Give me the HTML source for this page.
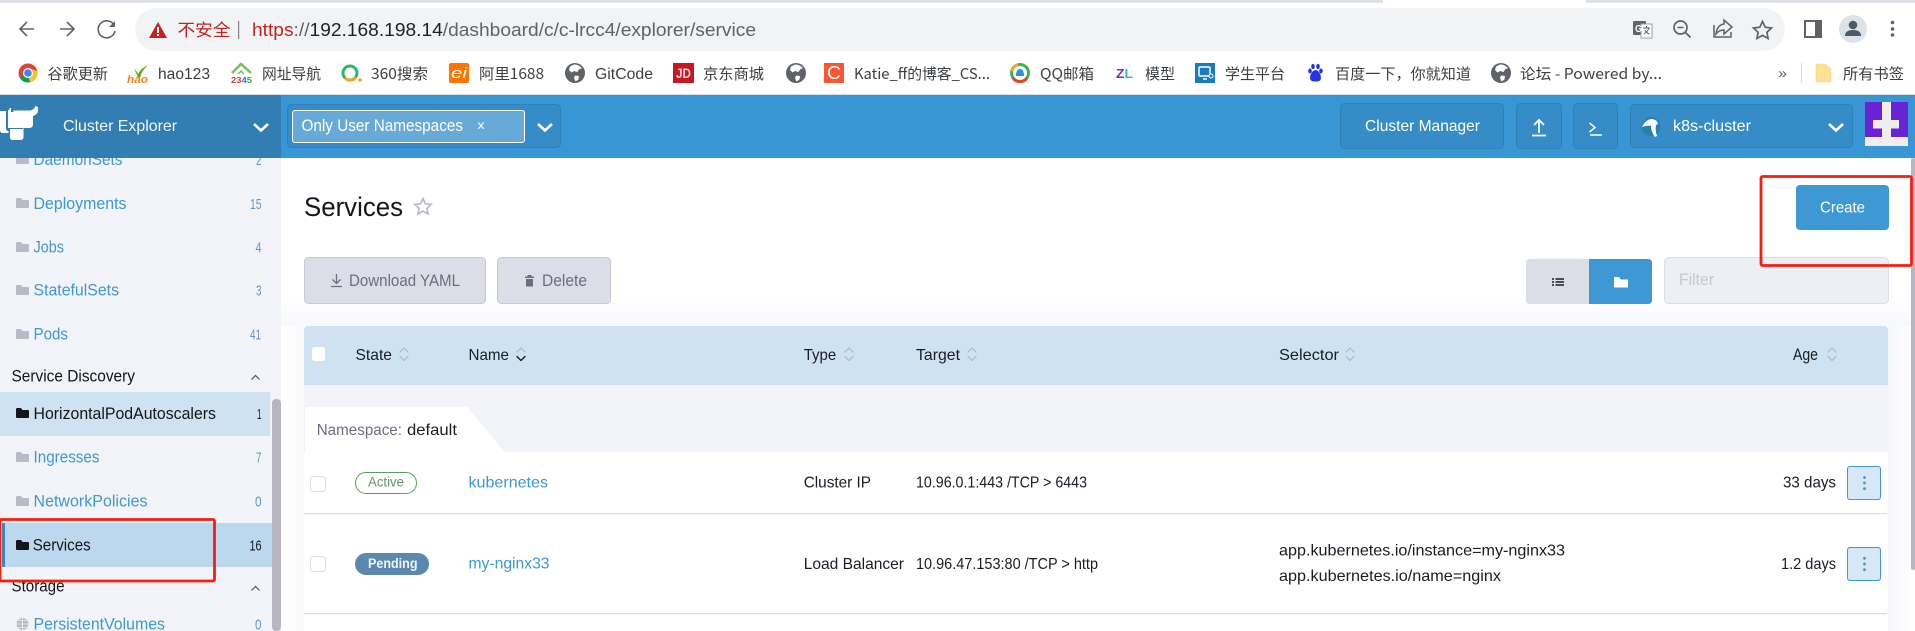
<!DOCTYPE html>
<html><head><meta charset="utf-8"><title>Services</title>
<style>
html,body{margin:0;padding:0;background:#fff;width:1915px;height:631px;overflow:hidden}
svg{display:block}
text{font-family:"Liberation Sans","Noto Sans CJK SC",sans-serif;font-size:16px;fill:#1b1c24;white-space:pre}
.bm{font-size:15.5px;fill:#3c4043}
.cjk{font-family:"Noto Sans CJK SC","Liberation Sans",sans-serif;font-size:15px;fill:#3c4043}
.side{font-size:17px;fill:#3d98d3}
.cnt{font-size:15px;fill:#5f97cf}
.hd{fill:#e8f3fb;font-size:16px}
.url{font-size:18px}
</style></head><body>
<svg xmlns="http://www.w3.org/2000/svg" width="1915" height="631" viewBox="0 0 1915 631">
<defs>
<path id="fo" d="M0 1.2Q0 0 1.2 0H5L6.6 2H12Q13 2 13 3V9Q13 10 12 10H1Q0 10 0 9Z"/>
<g id="sort" fill="none" stroke-width="1.1" stroke-linecap="round" stroke-linejoin="round"><path d="M1 5 5 1 9 5" /><path d="M1 9.5 5 13.500 9 9.500"/></g>
<g id="globe"><circle cx="10" cy="10" r="10" fill="#5f6368"/><path d="M9 1.500Q13 1 17 5L14 6.500 12.500 9 9 8 6.500 9.500 4 7 5 3.500ZM10 12.500 14 13 13.500 16.500 10.500 18.500 9 15Z" fill="#fff"/></g>
</defs>

<!-- chrome -->
<rect width="1915" height="95" fill="#fff"/>
<rect width="1383" height="3" fill="#dee1e6"/><rect x="1586" width="329" height="3" fill="#dee1e6"/>
<rect x="0" y="94" width="1915" height="1.500" fill="#d5dbe1"/>
<g fill="none" stroke="#5f6368" stroke-width="1.600">
<path d="M34 29H20M27 22l-7 7 7 7"/><path d="M60 29H74M67 22l7 7-7 7"/>
<path d="M114 25A8.500 8.500 0 1 0 115 31"/><path d="M115 21v6h-6" fill="#5f6368" stroke="none"/>
</g>
<rect x="135" y="8" width="1650" height="43" rx="21.500" fill="#f1f3f4"/>
<path d="M158 22 167 38H149Z" fill="#c5221f"/><rect x="157" y="27" width="2" height="6" fill="#fff"/><rect x="157" y="34" width="2" height="2" fill="#fff"/>
<text class="cjk" x="177.500" y="36" textLength="53" lengthAdjust="spacingAndGlyphs" style="fill:#c5221f;font-size:17px">不安全</text>
<rect x="238" y="21" width="1.200" height="18" fill="#80868b"/>
<text class="url" x="252" y="36" textLength="504" lengthAdjust="spacingAndGlyphs"><tspan fill="#c5221f">https</tspan><tspan fill="#5f6368">://</tspan><tspan fill="#202124">192.168.198.14</tspan><tspan fill="#5f6368">/dashboard/c/c-lrcc4/explorer/service</tspan></text>
<!-- right toolbar icons -->
<g>
<rect x="1633" y="21" width="13" height="14" rx="1.500" fill="#5f6368"/><rect x="1641" y="24" width="11" height="14" fill="#fff" stroke="#9aa0a6" stroke-width="1"/>
<text x="1635" y="32" textLength="7" lengthAdjust="spacingAndGlyphs" style="font-size:10px;font-weight:bold;fill:#fff">G</text>
<path d="M1643 28h7M1646.500 26v2M1649 28q-1.500 4-5 6M1645 30q1.500 3 4.500 4" stroke="#5f6368" fill="none" stroke-width="1"/>
<circle cx="1680.500" cy="27.500" r="6.500" fill="none" stroke="#5f6368" stroke-width="1.700"/><path d="M1685.500 32.500 1690.500 37.500" stroke="#5f6368" stroke-width="1.800"/><path d="M1677.500 27.500h6" stroke="#5f6368" stroke-width="1.500"/>
<path d="M1714 25v12h17V32M1716 34q1-9 8-10v-4l8 7-8 7v-4q-5 0-8 4Z" fill="none" stroke="#5f6368" stroke-width="1.500"/>
<path d="M1762.500 21.500l2.700 5.700 6.300.8-4.600 4.300 1.200 6.200-5.600-3.100-5.600 3.100 1.200-6.200-4.600-4.300 6.300-.8Z" fill="none" stroke="#5f6368" stroke-width="1.700"/>
<rect x="1804" y="20" width="18" height="18" fill="#5f6368"/><rect x="1806" y="22" width="9" height="14" fill="#fff"/>
<circle cx="1853" cy="29" r="14" fill="#dee1e6"/><circle cx="1853" cy="25" r="4.300" fill="#4e5a66"/><path d="M1845 36q0-6 8-6t8 6Z" fill="#4e5a66"/>
<circle cx="1892.500" cy="22.500" r="1.800" fill="#5f6368"/><circle cx="1892.500" cy="29" r="1.800" fill="#5f6368"/><circle cx="1892.500" cy="35" r="1.800" fill="#5f6368"/>
</g>

<!-- bookmarks -->
<g>
<circle cx="28" cy="73" r="9.500" fill="#db4437"/><path d="M28 73 19.800 78 A9.500 9.500 0 0 0 30 82.300Z" fill="#0f9d58"/><path d="M28 73 30 82.300A9.500 9.500 0 0 0 37.400 71 L28 68Z" fill="#fbc02d"/><circle cx="28" cy="73" r="5" fill="#fff"/><circle cx="28" cy="73" r="3.800" fill="#4285f4"/>
<text class="cjk" x="47.500" y="79" textLength="60.500" lengthAdjust="spacingAndGlyphs">谷歌更新</text>
<path d="M134 69q3 2 4 5 3-6 10-9-6 5-8 13-1 1-2 0-2-6-4-9Z" fill="#69a81d"/>
<text x="127" y="83" textLength="21" lengthAdjust="spacingAndGlyphs" style="font-size:11px;font-style:italic;font-weight:bold;fill:#f58220">hao</text>
<text class="bm" x="158" y="79" textLength="52" lengthAdjust="spacingAndGlyphs">hao123</text>
<path d="M232 73 241 64 251 73" fill="none" stroke="#7dbb63" stroke-width="2.500"/><path d="M238 74l3-3 3 3" fill="none" stroke="#7dbb63" stroke-width="1.500"/>
<text x="231" y="83" textLength="21" lengthAdjust="spacingAndGlyphs" style="font-size:8.500px;font-weight:bold;fill:#d8392b">23<tspan fill="#2b7bd4">4</tspan><tspan fill="#2aa84a">5</tspan></text>
<text class="cjk" x="262" y="79" textLength="59" lengthAdjust="spacingAndGlyphs">网址导航</text>
<circle cx="350" cy="73" r="7" fill="none" stroke="#2fb56b" stroke-width="3"/><path d="M345 78A7 7 0 0 0 356 77" fill="none" stroke="#f6a623" stroke-width="3"/><circle cx="360" cy="80" r="1.800" fill="#f6a623"/>
<text class="cjk" x="371" y="79" textLength="57" lengthAdjust="spacingAndGlyphs">360搜索</text>
<rect x="449" y="63" width="20" height="20" rx="2" fill="#ff7300"/><text x="451" y="78" textLength="16" lengthAdjust="spacingAndGlyphs" style="font-size:15px;font-style:italic;fill:#fff">ei</text>
<text class="cjk" x="479" y="79" textLength="65" lengthAdjust="spacingAndGlyphs">阿里1688</text>
<use href="#globe" x="565" y="63"/>
<text class="bm" x="595" y="79" textLength="58" lengthAdjust="spacingAndGlyphs">GitCode</text>
<rect x="673" y="63" width="21" height="20" fill="#c81623"/><text x="676" y="78" textLength="15" lengthAdjust="spacingAndGlyphs" style="font-size:14px;font-weight:bold;fill:#f4d4d6">JD</text>
<text class="cjk" x="703" y="79" textLength="61" lengthAdjust="spacingAndGlyphs">京东商城</text>
<use href="#globe" x="786" y="63"/>
<rect x="824" y="63" width="20" height="20" fill="#fc5531"/><text x="827" y="79" textLength="14" lengthAdjust="spacingAndGlyphs" style="font-size:18px;fill:#fff">C</text>
<text class="cjk" x="854" y="79" textLength="136" lengthAdjust="spacingAndGlyphs">Katie_ff的博客_CS...</text>
<circle cx="1020" cy="73" r="8.500" fill="none" stroke="#3fb34f" stroke-width="3"/><path d="M1013 78A8.500 8.500 0 0 0 1027 78" fill="none" stroke="#e8452c" stroke-width="3"/><path d="M1012 71A8.500 8.500 0 0 1 1018 64.800" fill="none" stroke="#f7a823" stroke-width="3"/><path d="M1016 76q0-7 4-7t4 7Z" fill="#2f8fe0"/>
<text class="cjk" x="1040" y="79" textLength="54" lengthAdjust="spacingAndGlyphs">QQ邮箱</text>
<text x="1116" y="78" textLength="17" lengthAdjust="spacingAndGlyphs" style="font-size:13px;font-weight:bold;fill:#6a32c9">Z<tspan fill="#2ec4a6">L</tspan></text>
<text class="cjk" x="1145" y="79" textLength="30" lengthAdjust="spacingAndGlyphs">模型</text>
<rect x="1195" y="63" width="20" height="20" fill="#1a7bbf"/><rect x="1199" y="67" width="11" height="9" rx="1" fill="none" stroke="#fff" stroke-width="1.500"/><path d="M1203 79h4" stroke="#fff" stroke-width="1.500"/><circle cx="1211" cy="76" r="2" fill="#1a7bbf" stroke="#fff"/>
<text class="cjk" x="1225" y="79" textLength="60" lengthAdjust="spacingAndGlyphs">学生平台</text>
<g fill="#2932e1"><ellipse cx="1310" cy="71" rx="1.800" ry="2.500"/><ellipse cx="1313" cy="66.500" rx="1.800" ry="2.600"/><ellipse cx="1318" cy="66.500" rx="1.800" ry="2.600"/><ellipse cx="1321" cy="71" rx="1.800" ry="2.500"/><path d="M1315.500 70q3 0 5 5 2 7-5 6.500-7 .5-5-6.500 2-5 5-5Z"/></g>
<text class="cjk" x="1335" y="79" textLength="136" lengthAdjust="spacingAndGlyphs">百度一下，你就知道</text>
<use href="#globe" x="1491" y="63"/>
<text class="cjk" x="1520" y="79" textLength="142" lengthAdjust="spacingAndGlyphs">论坛 - Powered by...</text>
<text class="bm" x="1778" y="78" textLength="9" lengthAdjust="spacingAndGlyphs" style="font-size:15px;fill:#5f6368">»</text>
<rect x="1801" y="63" width="1" height="20" fill="#dadce0"/>
<path d="M1816 66q0-2 2-2h7l6 5v11q0 2-2 2h-11q-2 0-2-2Z" fill="#fde293" stroke="#f1d27c" stroke-width=".6"/>
<text class="cjk" x="1843" y="79" textLength="61" lengthAdjust="spacingAndGlyphs">所有书签</text>
</g>

<!-- main -->
<rect y="158" width="1915" height="473" fill="#fff"/>
<defs><linearGradient id="sh" x1="0" y1="0" x2="0" y2="1"><stop offset="0" stop-color="#fff"/><stop offset="1" stop-color="#f7f8fb"/></linearGradient>
<linearGradient id="shr" x1="0" y1="0" x2="1" y2="0"><stop offset="0" stop-color="#f6f7fb"/><stop offset="1" stop-color="#fff"/></linearGradient>
<linearGradient id="shl" x1="0" y1="0" x2="1" y2="0"><stop offset="0" stop-color="#fff"/><stop offset="1" stop-color="#f9f9fc"/></linearGradient></defs>
<rect x="281" y="296" width="1634" height="30" fill="url(#sh)"/>
<rect x="281" y="326" width="23" height="305" fill="url(#shl)"/>
<rect x="1888" y="326" width="27" height="305" fill="url(#shr)"/>

<!-- sidebar -->
<rect y="158" width="281" height="473" fill="#f3f4f9"/>
<g fill="#b9bac7">
<use href="#fo" x="16" y="154"/><use href="#fo" x="16" y="198"/><use href="#fo" x="16" y="242"/><use href="#fo" x="16" y="285"/><use href="#fo" x="16" y="329"/><use href="#fo" x="16" y="452"/><use href="#fo" x="16" y="496"/>
</g>
<text class="side" x="33.500" y="165" textLength="89" lengthAdjust="spacingAndGlyphs">DaemonSets</text>
<text class="cnt" x="256" y="165" textLength="5.500" lengthAdjust="spacingAndGlyphs">2</text>
<text class="side" x="33.500" y="209" textLength="93" lengthAdjust="spacingAndGlyphs">Deployments</text><text class="cnt" x="250" y="209" textLength="11.600" lengthAdjust="spacingAndGlyphs">15</text>
<text class="side" x="33.500" y="252.500" textLength="30.500" lengthAdjust="spacingAndGlyphs">Jobs</text><text class="cnt" x="255.500" y="252.500" textLength="6" lengthAdjust="spacingAndGlyphs">4</text>
<text class="side" x="33.500" y="295.500" textLength="85.500" lengthAdjust="spacingAndGlyphs">StatefulSets</text><text class="cnt" x="256" y="295.500" textLength="5.500" lengthAdjust="spacingAndGlyphs">3</text>
<text class="side" x="33.500" y="339.500" textLength="34.500" lengthAdjust="spacingAndGlyphs">Pods</text><text class="cnt" x="250" y="339.500" textLength="11" lengthAdjust="spacingAndGlyphs">41</text>
<text x="11.500" y="381.500" textLength="123.500" lengthAdjust="spacingAndGlyphs" style="font-size:16.500px;fill:#14151c">Service Discovery</text>
<path d="M251.500 379.500 255.500 375.500 259.500 379.500" fill="none" stroke="#555" stroke-width="1.200"/>
<rect y="392" width="270" height="44" fill="#cfe2f1"/>
<use href="#fo" x="16" y="408" fill="#14151c"/>
<text x="33.500" y="419" textLength="182.500" lengthAdjust="spacingAndGlyphs" style="font-size:17px;fill:#14151c">HorizontalPodAutoscalers</text>
<text class="cnt" x="257" y="419" textLength="4.500" lengthAdjust="spacingAndGlyphs" style="fill:#14151c">1</text>
<text class="side" x="33.500" y="462.500" textLength="66" lengthAdjust="spacingAndGlyphs">Ingresses</text><text class="cnt" x="256" y="462.500" textLength="5.500" lengthAdjust="spacingAndGlyphs">7</text>
<text class="side" x="33.500" y="506.500" textLength="114" lengthAdjust="spacingAndGlyphs">NetworkPolicies</text><text class="cnt" x="255" y="506.500" textLength="6.500" lengthAdjust="spacingAndGlyphs">0</text>
<rect x="2" y="523" width="270" height="44" fill="#bbd8ef"/><rect x="2" y="523" width="3" height="44" fill="#3d86c0"/>
<use href="#fo" x="16" y="540" fill="#14151c"/>
<text x="32.700" y="550.500" textLength="58" lengthAdjust="spacingAndGlyphs" style="font-size:17px;fill:#14151c">Services</text>
<text class="cnt" x="249.500" y="550.500" textLength="12" lengthAdjust="spacingAndGlyphs" style="fill:#14151c">16</text>
<text x="11.500" y="591.500" textLength="53" lengthAdjust="spacingAndGlyphs" style="font-size:16.500px;fill:#14151c">Storage</text>
<path d="M251.500 590.500 255.500 586.500 259.500 590.500" fill="none" stroke="#555" stroke-width="1.200"/>
<circle cx="22.500" cy="624" r="6" fill="#b9bac7"/><path d="M16.500 624h12M22.500 618v12M18 620.500h9M18 627.500h9" stroke="#f3f4f9" stroke-width=".8"/>
<text class="side" x="33.500" y="629.500" textLength="131.500" lengthAdjust="spacingAndGlyphs">PersistentVolumes</text><text class="cnt" x="255" y="629.500" textLength="6.500" lengthAdjust="spacingAndGlyphs">0</text>
<rect x="272" y="399" width="9" height="232" rx="4" fill="#b6b6c2"/>
<rect x="0" y="519.500" width="214.500" height="61.500" rx="1.500" fill="none" stroke="#fb1c10" stroke-width="2.800"/>

<!-- title -->
<text x="304" y="216" textLength="99" lengthAdjust="spacingAndGlyphs" style="font-size:27px;fill:#14151c">Services</text>
<path d="M423 198.500l2.400 5.300 5.800.6-4.300 3.900 1.200 5.700-5.100-2.900-5.100 2.900 1.200-5.700-4.300-3.900 5.800-.6Z" fill="none" stroke="#b9bac7" stroke-width="1.700"/>

<!-- buttons -->
<rect x="304.500" y="257.500" width="181" height="46" rx="4" fill="#dcdee7" stroke="#c6c8d5"/>
<path d="M336.500 274v9M332.500 279.500l4 4 4-4M331 286.500h11" fill="none" stroke="#6c6e80" stroke-width="1.300"/>
<text x="349" y="286" textLength="111" lengthAdjust="spacingAndGlyphs" style="font-size:16.500px;fill:#6c6e80">Download YAML</text>
<rect x="497.500" y="257.500" width="113" height="46" rx="4" fill="#dcdee7" stroke="#c6c8d5"/>
<path d="M525 278h9v-1.500h-2.500v-1.500h-4v1.500H525ZM526 279h7v7.500h-7Z" fill="#6c6e80"/>
<text x="542" y="286" textLength="45" lengthAdjust="spacingAndGlyphs" style="font-size:16.500px;fill:#6c6e80">Delete</text>

<rect x="1796" y="185" width="93" height="45" rx="4" fill="#3d98d3"/>
<text x="1820" y="212.500" textLength="45" lengthAdjust="spacingAndGlyphs" style="font-size:16px;fill:#fff">Create</text>

<path d="M1530 259h59v45h-59q-4 0-4-4v-37q0-4 4-4Z" fill="#dcdee7"/>
<path d="M1589 259h59q4 0 4 4v37q0 4-4 4h-59Z" fill="#3d98d3"/>
<path d="M1552 279h2M1552 282h2M1552 285h2M1555.500 279h8.500M1555.500 282h8.500M1555.500 285h8.500" stroke="#1b1c24" stroke-width="1.400"/>
<path d="M1614 277h5l1.800 2.500h7.200v8h-14Z" fill="#fff"/>
<rect x="1664.500" y="257.500" width="224" height="46" rx="4" fill="#eeeff4" stroke="#dcdee7"/>
<text x="1679" y="285" textLength="35" lengthAdjust="spacingAndGlyphs" style="font-size:17px;fill:#c5c6d3">Filter</text>

<!-- table -->
<path d="M304 330q0-4 4-4h1576q4 0 4 4v55H304Z" fill="#cfe2f1"/>
<rect x="312" y="347" width="13" height="14" rx="2.500" fill="#fff"/>
<g>
<text x="355.500" y="360" textLength="36.500" lengthAdjust="spacingAndGlyphs">State</text><use href="#sort" x="399" y="347" stroke="#a9b5c4"/>
<text x="468.500" y="360" textLength="40.500" lengthAdjust="spacingAndGlyphs">Name</text>
<g fill="none" stroke-width="1.100" stroke-linecap="round" stroke-linejoin="round"><path d="M517 352 521 348 525 352" stroke="#a9b5c4"/><path d="M517 356.500 521 360.500 525 356.500" stroke="#1b1c24" stroke-width="1.400"/></g>
<text x="803.700" y="360" textLength="32.500" lengthAdjust="spacingAndGlyphs">Type</text><use href="#sort" x="844" y="347" stroke="#a9b5c4"/>
<text x="916" y="360" textLength="44" lengthAdjust="spacingAndGlyphs">Target</text><use href="#sort" x="967" y="347" stroke="#a9b5c4"/>
<text x="1279" y="360" textLength="60" lengthAdjust="spacingAndGlyphs">Selector</text><use href="#sort" x="1345" y="347" stroke="#a9b5c4"/>
<text x="1793" y="360" textLength="25" lengthAdjust="spacingAndGlyphs" style="font-size:17px">Age</text><use href="#sort" x="1827" y="347" stroke="#a9b5c4"/>
</g>
<rect x="304" y="385" width="1584" height="67" fill="#f3f4f9"/>
<path d="M305 410q0-3 3-3H467L505 452H305Z" fill="#fff"/>
<text x="316.700" y="435" textLength="85.300" lengthAdjust="spacingAndGlyphs" style="fill:#6c6e80">Namespace:</text>
<text x="407" y="435" textLength="50" lengthAdjust="spacingAndGlyphs">default</text>
<rect x="304" y="452" width="1583" height="179" fill="#fff"/>
<rect x="304" y="513" width="1583" height="1.200" fill="#dcdee7"/>
<rect x="304" y="613" width="1583" height="1.200" fill="#dcdee7"/>

<rect x="310.500" y="476.500" width="15" height="15" rx="3" fill="#fff" stroke="#dcdee7"/>
<rect x="355.500" y="472.500" width="61" height="21" rx="10.500" fill="#fff" stroke="#5a9e5e"/>
<text x="368" y="486.700" textLength="36" lengthAdjust="spacingAndGlyphs" style="font-size:13.500px;fill:#5d995d">Active</text>
<text x="468.500" y="487.500" textLength="79.500" lengthAdjust="spacingAndGlyphs" style="fill:#3d98d3">kubernetes</text>
<text x="803.700" y="487.700" textLength="67.300" lengthAdjust="spacingAndGlyphs">Cluster IP</text>
<text x="916" y="487.700" textLength="171" lengthAdjust="spacingAndGlyphs">10.96.0.1:443 /TCP &gt; 6443</text>
<text x="1783" y="487.700" textLength="53" lengthAdjust="spacingAndGlyphs">33 days</text>
<rect x="1847.500" y="466.500" width="33" height="33" rx="2.500" fill="#d6e8f5" stroke="#3d98d3"/>
<circle cx="1864.500" cy="477.500" r="1.400" fill="#3d98d3"/><circle cx="1864.500" cy="483" r="1.400" fill="#3d98d3"/><circle cx="1864.500" cy="488.700" r="1.400" fill="#3d98d3"/>

<rect x="310.500" y="556.500" width="15" height="15" rx="3" fill="#fff" stroke="#dcdee7"/>
<rect x="355" y="553" width="74" height="22" rx="11" fill="#5a88ae"/>
<text x="368" y="568" textLength="49.500" lengthAdjust="spacingAndGlyphs" style="font-size:13.500px;font-weight:bold;fill:#f2f6fa">Pending</text>
<text x="468.500" y="568.500" textLength="81" lengthAdjust="spacingAndGlyphs" style="fill:#3d98d3">my-nginx33</text>
<text x="803.700" y="569" textLength="100.300" lengthAdjust="spacingAndGlyphs">Load Balancer</text>
<text x="916" y="569" textLength="182" lengthAdjust="spacingAndGlyphs">10.96.47.153:80 /TCP &gt; http</text>
<text x="1279" y="555.700" textLength="286" lengthAdjust="spacingAndGlyphs">app.kubernetes.io/instance=my-nginx33</text>
<text x="1279" y="581" textLength="222" lengthAdjust="spacingAndGlyphs">app.kubernetes.io/name=nginx</text>
<text x="1781" y="569" textLength="55" lengthAdjust="spacingAndGlyphs">1.2 days</text>
<rect x="1847.500" y="547.500" width="33" height="33" rx="2.500" fill="#d6e8f5" stroke="#3d98d3"/>
<circle cx="1864.500" cy="558.300" r="1.400" fill="#3d98d3"/><circle cx="1864.500" cy="564" r="1.400" fill="#3d98d3"/><circle cx="1864.500" cy="569.700" r="1.400" fill="#3d98d3"/>

<rect x="1911" y="158" width="4" height="412" rx="2" fill="#b6b6c2"/>
<rect x="1761" y="176.500" width="150.500" height="89" rx="1.500" fill="none" stroke="#fb1c10" stroke-width="2.800"/>

<!-- header -->
<rect y="95" width="1915" height="63" fill="#3996d4"/>
<rect y="95" width="281" height="63" fill="#327db1"/>
<g fill="#fff">
<path d="M8 110h1.500v-2h1.500v4h2.500v-1.500H30Q33.500 110 35 107V106L38 107V111Q38 114 33 116V124Q33 128 29 128H23.500V137Q23.500 140 20.500 140H13Q10 140 10 137V128H8Z"/>
<path d="M0 111H6V128Q6 131 8.500 131V133H3Q0 133 0 130Z"/>
</g>
<path d="M9 128.500h14" stroke="#327db1" stroke-width="1" fill="none"/>
<text x="63" y="131" textLength="114" lengthAdjust="spacingAndGlyphs" style="font-size:16px;fill:#eef5fa">Cluster Explorer</text>
<path d="M254 124 261 130.500 268 124" fill="none" stroke="#fff" stroke-width="2.600"/>
<rect x="287.500" y="104.500" width="273" height="43" rx="4" fill="#358cc6" stroke="#2e80b8"/>
<rect x="292.500" y="110.500" width="232" height="32" rx="2.500" fill="#67aad8" stroke="#fff"/>
<text x="301.500" y="131" textLength="161.500" lengthAdjust="spacingAndGlyphs" style="font-size:17px;fill:#fff">Only User Namespaces</text>
<text x="477" y="131" textLength="8" lengthAdjust="spacingAndGlyphs" style="font-size:16px;fill:#fff">×</text>
<path d="M538 124 545 130.500 552 124" fill="none" stroke="#fff" stroke-width="2.600"/>

<rect x="1340.500" y="103.500" width="163" height="45" rx="4" fill="#358cc6" stroke="#2e80b8"/>
<text x="1365" y="131" textLength="115" lengthAdjust="spacingAndGlyphs" style="font-size:16px;fill:#fff">Cluster Manager</text>
<rect x="1516.500" y="103.500" width="45" height="45" rx="4" fill="#358cc6" stroke="#2e80b8"/>
<path d="M1539 133V120M1534 125l5-5 5 5M1532 135.500h14" fill="none" stroke="#fff" stroke-width="1.800"/>
<rect x="1573.500" y="103.500" width="44" height="45" rx="4" fill="#358cc6" stroke="#2e80b8"/>
<path d="M1589.500 123l5.500 4.500-5.500 4.500M1590 135h12" fill="none" stroke="#fff" stroke-width="1.500"/>
<rect x="1630.500" y="104.500" width="222" height="43" rx="4" fill="#358cc6" stroke="#2e80b8"/>
<circle cx="1651" cy="126.500" r="9.500" fill="#2c7fac"/><path d="M1642 127q3-7 9-8 6 0 7 5l-2 1q-1 6 1 11l-2 1q-4-5-4-11-4-1-9 1Z" fill="#fff"/>
<text x="1673" y="131" textLength="78" lengthAdjust="spacingAndGlyphs" style="font-size:16px;fill:#fff">k8s-cluster</text>
<path d="M1829 124 1836 130.500 1843 124" fill="none" stroke="#fff" stroke-width="2.600"/>
<rect x="1865" y="102" width="43" height="44" fill="#eeeeee"/>
<rect x="1865" y="102" width="17" height="35" fill="#6a23d4"/><rect x="1891" y="102" width="17" height="35" fill="#6a23d4"/>
<rect x="1873" y="120" width="26" height="8.500" fill="#eeeeee"/>
</svg>
</body></html>
